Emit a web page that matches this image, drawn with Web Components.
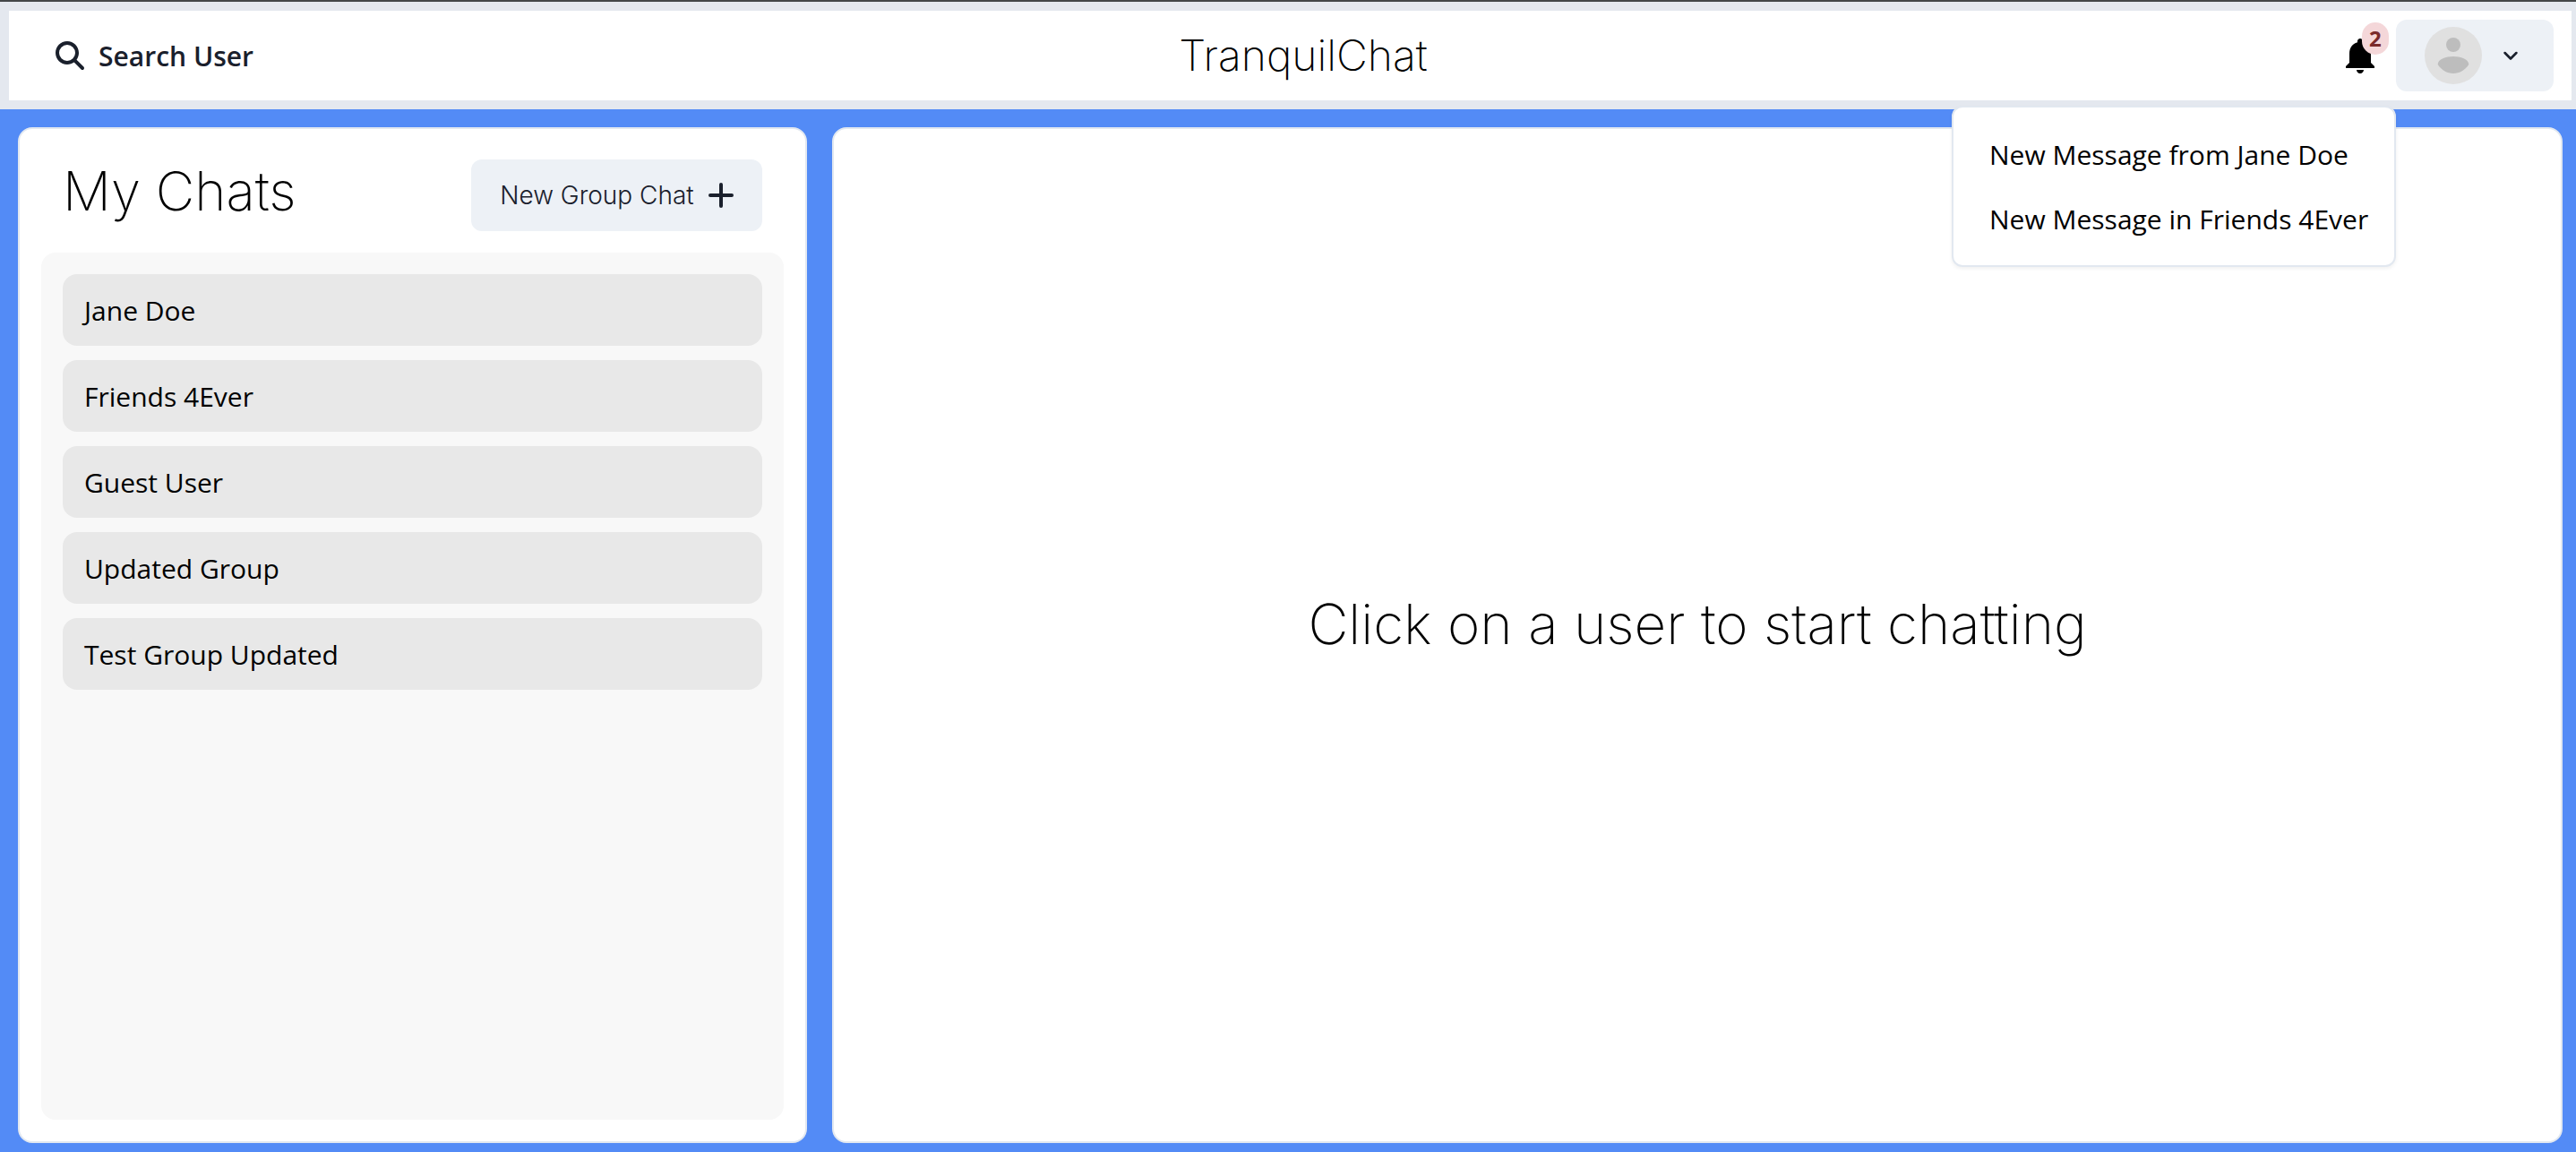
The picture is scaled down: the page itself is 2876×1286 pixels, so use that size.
<!DOCTYPE html>
<html lang="en">
<head>
<meta charset="utf-8">
<title>TranquilChat</title>
<style>
  html, body { height: 100%; margin: 0; }
  body {
    --line: #e2e8f0;
    --soft: #edf1f6;
    --ink: #1a202c;
    --display: Inter, "Open Sans", sans-serif;
    font-family: "Open Sans", "Noto Sans", sans-serif;
    font-size: 30px;
    line-height: 48px;
    color: #000;
    background: #538bf6;
  }
</style>
</head>
<body>
<chat-app></chat-app>
<script>
const base = `
  *, *::before, *::after { box-sizing: border-box; }
  button { font: inherit; color: inherit; margin: 0; border: 0; background: none; cursor: pointer; }
  h1, h2, p { margin: 0; font-family: var(--display); font-weight: 200; }
  svg { display: block; flex: none; }
`;
function define(name, css, html) {
  const template = document.createElement('template');
  template.innerHTML = `<style>${base}${css}</style>${html}`;
  customElements.define(name, class extends HTMLElement {
    constructor() {
      super();
      this.attachShadow({ mode: 'open' }).append(template.content.cloneNode(true));
    }
  });
}

define('search-button', `
  :host { display: block; }
  button { display: flex; align-items: center; gap: 16px; height: 80px; padding: 0 32px; font-weight: 600; color: var(--ink); }
  span { padding-top: 2px; }
`, `
  <button type="button">
    <svg width="32" height="32" viewBox="0 0 512 512" fill="currentColor" aria-hidden="true"><path d="M416 208c0 45.9-14.9 88.3-40 122.7L502.6 457.4c12.5 12.5 12.5 32.8 0 45.3s-32.8 12.5-45.3 0L330.7 376c-34.4 25.2-76.8 40-122.7 40C93.1 416 0 322.9 0 208S93.1 0 208 0S416 93.1 416 208zM208 352a144 144 0 1 0 0-288 144 144 0 1 0 0 288z"/></svg>
    <span><slot></slot></span>
  </button>
`);

define('notification-bell', `
  :host { display: block; position: relative; }
  button { display: flex; align-items: center; height: 80px; padding: 0 16px; }
  .badge {
    position: absolute; left: 42px; top: 3px; width: 30px; height: 36px;
    border-radius: 15px; background: #f4d7d9; color: #7a2b2b;
    font-size: 24px; line-height: 36px; font-weight: 700; text-align: center;
  }
  .menu {
    position: absolute; right: 0; top: calc(100% + 16px); z-index: 2; min-width: 496px; box-sizing: border-box;
    padding: 16px 0 16px 16px; border: 2px solid var(--line); border-radius: 12px;
    background: #fff; box-shadow: 0 2px 4px rgba(0, 0, 0, .06); white-space: nowrap;
  }
`, `
  <button type="button" aria-label="Notifications" aria-expanded="true">
    <svg width="48" height="48" viewBox="0 0 24 24" fill="currentColor" aria-hidden="true"><path d="M12 22c1.1 0 2-.9 2-2h-4c0 1.1.89 2 2 2zm6-6v-5c0-3.07-1.64-5.64-4.5-6.32V4c0-.83-.67-1.5-1.5-1.5s-1.5.67-1.5 1.5v.68C7.63 5.36 6 7.92 6 11v5l-2 2v1h16v-1l-2-2z"/></svg>
    <span class="badge">2</span>
  </button>
  <div class="menu" role="menu"><slot></slot></div>
`);

define('menu-entry', `
  :host { display: block; }
  button { display: block; width: 100%; padding: 13px 24px 11px; text-align: left; }
`, `<button type="button" role="menuitem"><slot></slot></button>`);

define('profile-button', `
  :host { display: block; }
  button { display: flex; align-items: center; gap: 16px; height: 80px; padding: 0 32px; border-radius: 12px; background: var(--soft); color: var(--ink); }
`, `
  <button type="button" aria-label="Account">
    <svg width="64" height="64" viewBox="0 0 64 64" aria-hidden="true">
      <circle cx="32" cy="32" r="32" fill="#e0e0e0"/>
      <g fill="#bdbdbd"><circle cx="32" cy="20" r="8"/><path d="M14.7 42C14.7 36 24 33 32 33s17.300 3 17.300 9C45.500 48 39 52 32 52s-13.500-4-17.300-10z"/></g>
    </svg>
    <svg width="32" height="32" viewBox="0 0 24 24" fill="none" stroke="currentColor" stroke-width="2" stroke-linecap="round" stroke-linejoin="round" aria-hidden="true"><path d="M7.200 9.800 12 14.600 16.800 9.800"/></svg>
  </button>
`);

define('app-header', `
  :host { display: flex; align-items: center; justify-content: space-between; padding: 10px 20px; background: #fff; border: solid #e4e8ef; border-width: 10px 5px 10px 10px; }
  h1 { font-size: 48px; line-height: 60px; }
  .tools { display: flex; }
`, `
  <search-button>Search User</search-button>
  <h1>TranquilChat</h1>
  <div class="tools">
    <notification-bell>
      <menu-entry>New Message from Jane Doe</menu-entry>
      <menu-entry>New Message in Friends 4Ever</menu-entry>
    </notification-bell>
    <profile-button></profile-button>
  </div>
`);

define('chat-item', `
  :host { display: block; }
  button { display: block; width: 100%; padding: 17px 24px 15px; border-radius: 16px; background: #e8e8e8; text-align: left; }
`, `<button type="button"><slot></slot></button>`);

define('my-chats', `
  :host { display: flex; flex-direction: column; padding: 24px; background: #fff; border: 2px solid var(--line); border-radius: 16px; }
  header { display: flex; align-items: flex-end; justify-content: space-between; padding: 0 24px 24px; }
  h2 { font-size: 60px; line-height: 90px; }
  header button { display: flex; align-items: center; gap: 16px; height: 80px; padding: 0 32px; border-radius: 12px; background: var(--soft); color: var(--ink); font: 300 28px/34px var(--display); }
  .list { flex: 1; display: flex; flex-direction: column; gap: 16px; padding: 24px; border-radius: 16px; background: #f8f8f8; }
`, `
  <header>
    <h2>My Chats</h2>
    <button type="button">New Group Chat
      <svg width="28" height="28" viewBox="0 0 28 28" fill="none" stroke="currentColor" stroke-width="4" stroke-linecap="round" aria-hidden="true"><path d="M14 2v24M2 14h24"/></svg>
    </button>
  </header>
  <div class="list"><slot></slot></div>
`);

define('chat-box', `
  :host { display: flex; align-items: center; justify-content: center; padding-bottom: 24px; background: #fff; border: 2px solid var(--line); border-radius: 16px; }
  p { font-size: 62px; line-height: 90px; }
`, `<p><slot></slot></p>`);

define('chat-app', `
  :host { display: flex; flex-direction: column; min-height: 100vh; box-sizing: border-box; border-top: 2px solid #444749; }
  main { flex: 1; display: flex; justify-content: space-between; padding: 20px 15px 10px 20px; }
  my-chats, chat-box { box-sizing: border-box; }
  my-chats { width: 31%; }
  chat-box { width: 68%; }
`, `
  <app-header></app-header>
  <main>
    <my-chats>
      <chat-item>Jane Doe</chat-item>
      <chat-item>Friends 4Ever</chat-item>
      <chat-item>Guest User</chat-item>
      <chat-item>Updated Group</chat-item>
      <chat-item>Test Group Updated</chat-item>
    </my-chats>
    <chat-box>Click on a user to start chatting</chat-box>
  </main>
`);
</script>
</body>
</html>
